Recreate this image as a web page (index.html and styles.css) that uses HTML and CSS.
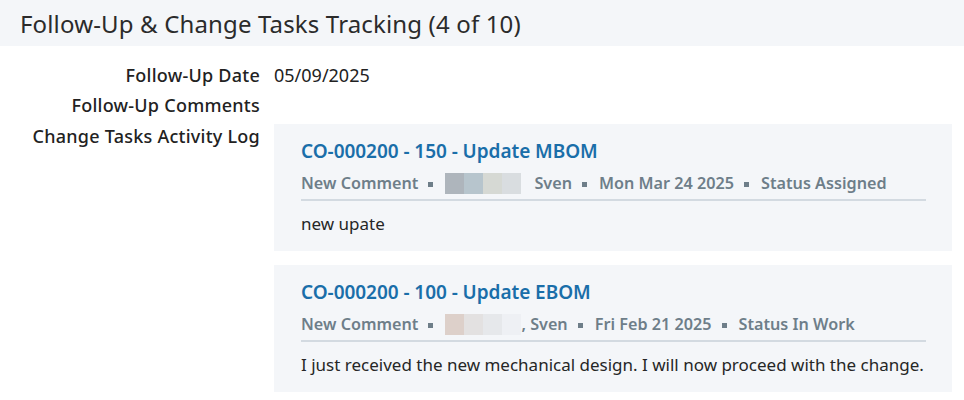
FILE: index.html
```html
<!DOCTYPE html>
<html lang="en">
<head>
<meta charset="utf-8">
<title>Follow-Up &amp; Change Tasks Tracking</title>
<link rel="stylesheet" href="styles.css">
</head>
<body>
<section class="panel">
  <header class="panel-head">
    <h2 class="panel-title">Follow-Up &amp; Change Tasks Tracking (4 of 10)</h2>
  </header>
  <div class="fields">
    <div class="label">Follow-Up Date</div>
    <div class="value">05/09/2025</div>
    <div class="label">Follow-Up Comments</div>
    <div class="value"></div>
    <div class="label label-log">Change Tasks Activity Log</div>
    <div class="value log">
      <article class="card">
        <h3 class="card-title">CO-000200 - 150 - Update MBOM</h3>
        <div class="meta">
          <span>New Comment</span><span class="dot"></span>
          <span class="blur blur-a"><i></i><i></i><i></i><i></i></span><span class="sp"></span>
          <span>Sven</span><span class="dot"></span>
          <span>Mon Mar 24 2025</span><span class="dot"></span>
          <span>Status Assigned</span>
        </div>
        <p class="comment">new upate</p>
      </article>
      <article class="card">
        <h3 class="card-title">CO-000200 - 100 - Update EBOM</h3>
        <div class="meta">
          <span>New Comment</span><span class="dot"></span>
          <span class="blur blur-b"><i></i><i></i><i></i><i></i></span><span>, Sven</span><span class="dot"></span>
          <span>Fri Feb 21 2025</span><span class="dot"></span>
          <span>Status In Work</span>
        </div>
        <p class="comment">I just received the new mechanical design. I will now proceed with the change.</p>
      </article>
    </div>
  </div>
</section>
</body>
</html>
```
FILE: styles.css
```css
* { box-sizing: border-box; }
html, body { margin: 0; padding: 0; background: #ffffff; }
body {
  font-family: "Noto Sans", "Open Sans", sans-serif;
  color: #262626;
}
.panel { width: 964px; }
.panel-head {
  background: #f4f6f9;
  height: 46px;
  padding: 0 20px;
  display: flex;
  align-items: center;
}
.panel-title {
  margin: 0;
  font-size: 24px;
  font-weight: 400;
  color: #2b2b2b;
  letter-spacing: 0.15px;
}
.fields {
  display: grid;
  grid-template-columns: 260px 1fr;
  column-gap: 14px;
  padding: 14px 12px 10px 0;
}
.label {
  text-align: right;
  font-size: 18px;
  font-weight: 500;
  line-height: 30px;
  color: #222222;
  letter-spacing: 0.25px;
}
.label-log { padding-top: 1px; }
.value {
  font-size: 18px;
  line-height: 30px;
  color: #222222;
}
.log {
  display: flex;
  flex-direction: column;
  gap: 14px;
  padding-top: 4px;
  line-height: normal;
}
.card {
  background: #f4f6f9;
  padding: 15px 26px 15px 27px;
}
.card-title {
  margin: 0;
  font-size: 19px;
  font-weight: 600;
  line-height: 24px;
  color: #1a6ea9;
  letter-spacing: -0.05px;
}
.meta {
  margin-top: 8px;
  display: flex;
  align-items: center;
  font-size: 16.2px;
  font-weight: 600;
  line-height: 24px;
  color: #6e7e89;
  padding-bottom: 4px;
  border-bottom: 2px solid #d3dae1;
  white-space: nowrap;
}
.dot {
  width: 5px;
  height: 5px;
  background: #6e7e89;
  margin: 2px 12px 0 10px;
}
.sp { width: 13px; }
.blur {
  display: flex;
  height: 21px;
  width: 76px;
}
.blur i { flex: 1; }
.blur-a i:nth-child(1) { background: #aeb5bc; }
.blur-a i:nth-child(2) { background: #b7c5cd; }
.blur-a i:nth-child(3) { background: #d6d9d4; }
.blur-a i:nth-child(4) { background: #d9dde0; }
.blur-b i:nth-child(1) { background: #ddd0ca; }
.blur-b i:nth-child(2) { background: #e3e1e1; }
.blur-b i:nth-child(3) { background: #e6e8eb; }
.blur-b i:nth-child(4) { background: #eef0f4; }
.comment {
  margin: 11px 0 0;
  font-size: 17px;
  line-height: 24px;
  color: #262626;
}
```
